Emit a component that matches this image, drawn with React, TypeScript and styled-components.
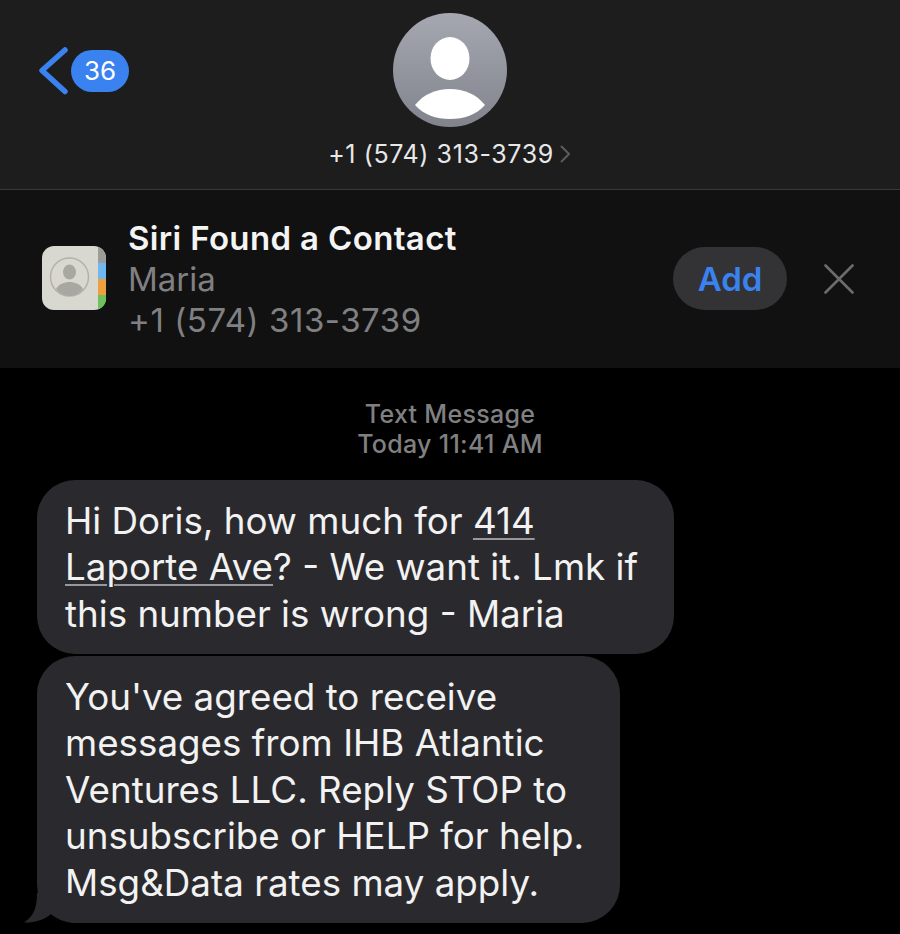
import React from 'react';
import styled, { createGlobalStyle } from 'styled-components';

const GlobalStyle = createGlobalStyle`
    html, body {
        margin: 0;
        padding: 0;
        background: #000;
    }
    body {
        font-family: Inter, "Liberation Sans", sans-serif;
        color: #fff;
    }
`

const Page = styled.div`
    width: 900px;
    height: 934px;
    overflow: hidden;
    background: #000;
`

const Header = styled.header`
    height: 176px;
    background: #1d1d1d;
    border-bottom: 1px solid #3a3a3c;
    display: grid;
    grid-template-columns: 1fr auto 1fr;
    padding-top: 13px;
`

const Back = styled.div`
    display: flex;
    align-items: center;
    align-self: start;
    margin: 33px 0 0 38px;
    gap: 1px;
`

const Badge = styled.div`
    width: 58px;
    height: 42px;
    padding-bottom: 2px;
    box-sizing: border-box;
    border-radius: 21px;
    background: #3a82f0;
    display: flex;
    align-items: center;
    justify-content: center;
    font-size: 26px;
`

const Contact = styled.div`
    display: flex;
    flex-direction: column;
    align-items: center;
`

const Avatar = styled.div`
    width: 114px;
    height: 114px;
    border-radius: 50%;
    overflow: hidden;
`

const PhoneLine = styled.div`
    display: flex;
    align-items: center;
    gap: 6px;
    padding-right: 2px;
    margin-top: 11px;
    font-size: 25px;
    line-height: 32px;
    color: #e8e8e8;
    letter-spacing: 0.6px;
`

const Banner = styled.section`
    height: 178px;
    background: #111;
    display: flex;
    align-items: center;
    padding-left: 42px;
    padding-right: 46px;
`

const BookIcon = styled.div`
    width: 64px;
    height: 64px;
    flex: none;
    margin-right: 22px;
    margin-bottom: 2px;
`

const Found = styled.div`
    flex: 1;
`

const FoundTitle = styled.div`
    font-size: 33px;
    line-height: 41px;
    font-weight: 600;
    letter-spacing: 0.35px;
    color: #f4f4f4;
`

const FoundLine = styled.div<{ $digits?: boolean }>`
    font-size: 33px;
    line-height: 41px;
    color: #808082;
    letter-spacing: ${props => (props.$digits ? '0.55px' : '0')};
`

const AddButton = styled.button`
    width: 114px;
    height: 63px;
    border: none;
    border-radius: 32px;
    background: #333335;
    color: #3a82f0;
    font-family: inherit;
    font-size: 33px;
    font-weight: 600;
    margin-right: 37px;
    margin-bottom: 1px;
    padding: 0;
`

const CloseIcon = styled.div`
    width: 30px;
    height: 30px;
    flex: none;
`

const Thread = styled.main`
    padding: 32px 0 0 37px;
`

const Stamp = styled.div`
    margin-left: -37px;
    text-align: center;
    font-size: 25px;
    line-height: 29.5px;
    font-weight: 500;
    letter-spacing: 0.3px;
    color: #808082;
    margin-bottom: 21px;
`

const Bubble = styled.div<{ $width: number }>`
    position: relative;
    box-sizing: border-box;
    width: ${props => props.$width}px;
    background: #2a2a2e;
    border-radius: 38px;
    padding: 17.5px 0 16.5px 28px;
    font-size: 36.75px;
    line-height: 46.5px;
    color: #f2f2f2;
    margin-bottom: 2.5px;
    white-space: nowrap;
`

const Tail = styled.svg`
    position: absolute;
    left: -13px;
    bottom: 0;
`

const Address = styled.span`
    text-decoration: underline;
    text-decoration-color: #98989c;
    text-decoration-thickness: 2px;
    text-underline-offset: 4px;
`

const App = () => {
    return (
        <Page>
            <GlobalStyle />
            <Header>
                <Back>
                    <svg width="32" height="50" viewBox="0 0 32 50">
                        <path d="M27 4 L4 24.5 L27 45.5" fill="none" stroke="#3a82f0" strokeWidth="5.5" strokeLinecap="round" strokeLinejoin="round" />
                    </svg>
                    <Badge>36</Badge>
                </Back>
                <Contact>
                    <Avatar>
                        <svg width="114" height="114" viewBox="0 0 114 114">
                            <defs>
                                <linearGradient id="avatarFill" x1="0" y1="0" x2="0" y2="1">
                                    <stop offset="0" stopColor="#a5a8b1" />
                                    <stop offset="1" stopColor="#82848d" />
                                </linearGradient>
                            </defs>
                            <rect width="114" height="114" fill="url(#avatarFill)" />
                            <ellipse cx="57" cy="45.5" rx="19.5" ry="21.5" fill="#fff" />
                            <path d="M22 92 C31 81 43 76 57 76 C71 76 83 81 92 92 C83 102 71 106 57 106 C43 106 31 102 22 92 Z" fill="#fff" />
                        </svg>
                    </Avatar>
                    <PhoneLine>
                        +1 (574) 313-3739
                        <svg width="10" height="18" viewBox="0 0 10 18">
                            <path d="M1 1 L9 9 L1 17" fill="none" stroke="#5c5c5e" strokeWidth="2" />
                        </svg>
                    </PhoneLine>
                </Contact>
            </Header>
            <Banner>
                <BookIcon>
                    <svg width="64" height="64" viewBox="0 0 64 64">
                        <rect width="64" height="64" rx="12" fill="#d9d8d0" />
                        <path d="M56 1 Q64 3 64 14 V17 H56 Z" fill="#9c9c98" />
                        <rect x="56" y="17" width="8" height="16" fill="#6fb8f0" />
                        <rect x="56" y="33" width="8" height="16" fill="#ee9f3e" />
                        <path d="M56 49 H64 V52 Q64 61 56 63 Z" fill="#6fc15b" />
                        <circle cx="27.5" cy="31" r="19" fill="none" stroke="#b3b1aa" strokeWidth="1.5" />
                        <ellipse cx="27.5" cy="26" rx="6.5" ry="7.5" fill="#a9a7a1" />
                        <path d="M14 43 C17 38 22 36 27.5 36 C33 36 38 38 41 43 C37 48 32 50 27.5 50 C23 50 18 48 14 43 Z" fill="#a9a7a1" />
                    </svg>
                </BookIcon>
                <Found>
                    <FoundTitle>Siri Found a Contact</FoundTitle>
                    <FoundLine>Maria</FoundLine>
                    <FoundLine $digits>+1 (574) 313-3739</FoundLine>
                </Found>
                <AddButton>Add</AddButton>
                <CloseIcon>
                    <svg width="30" height="30" viewBox="0 0 30 30">
                        <path d="M1.5 1.5 L28.5 28.5 M28.5 1.5 L1.5 28.5" stroke="#6c6c6e" strokeWidth="2.6" strokeLinecap="round" />
                    </svg>
                </CloseIcon>
            </Banner>
            <Thread>
                <Stamp>
                    Text Message
                    <br />
                    Today 11:41 AM
                </Stamp>
                <Bubble $width={637}>
                    Hi Doris, how much for <Address>414</Address>
                    <br />
                    <Address>Laporte Ave</Address>? - We want it. Lmk if
                    <br />
                    this number is wrong - Maria
                </Bubble>
                <Bubble $width={583}>
                    You've agreed to receive
                    <br />
                    messages from IHB Atlantic
                    <br />
                    Ventures LLC. Reply STOP to
                    <br />
                    unsubscribe or HELP for help.
                    <br />
                    Msg&amp;Data rates may apply.
                    <Tail width="52" height="30" viewBox="0 0 52 30">
                        <path d="M13 0 C13 10 12 22 0 29.5 C10 30 20 27 27 21 C33 25 42 29.5 52 30 L52 0 Z" fill="#2a2a2e" />
                    </Tail>
                </Bubble>
            </Thread>
        </Page>
    )
}

export default App
